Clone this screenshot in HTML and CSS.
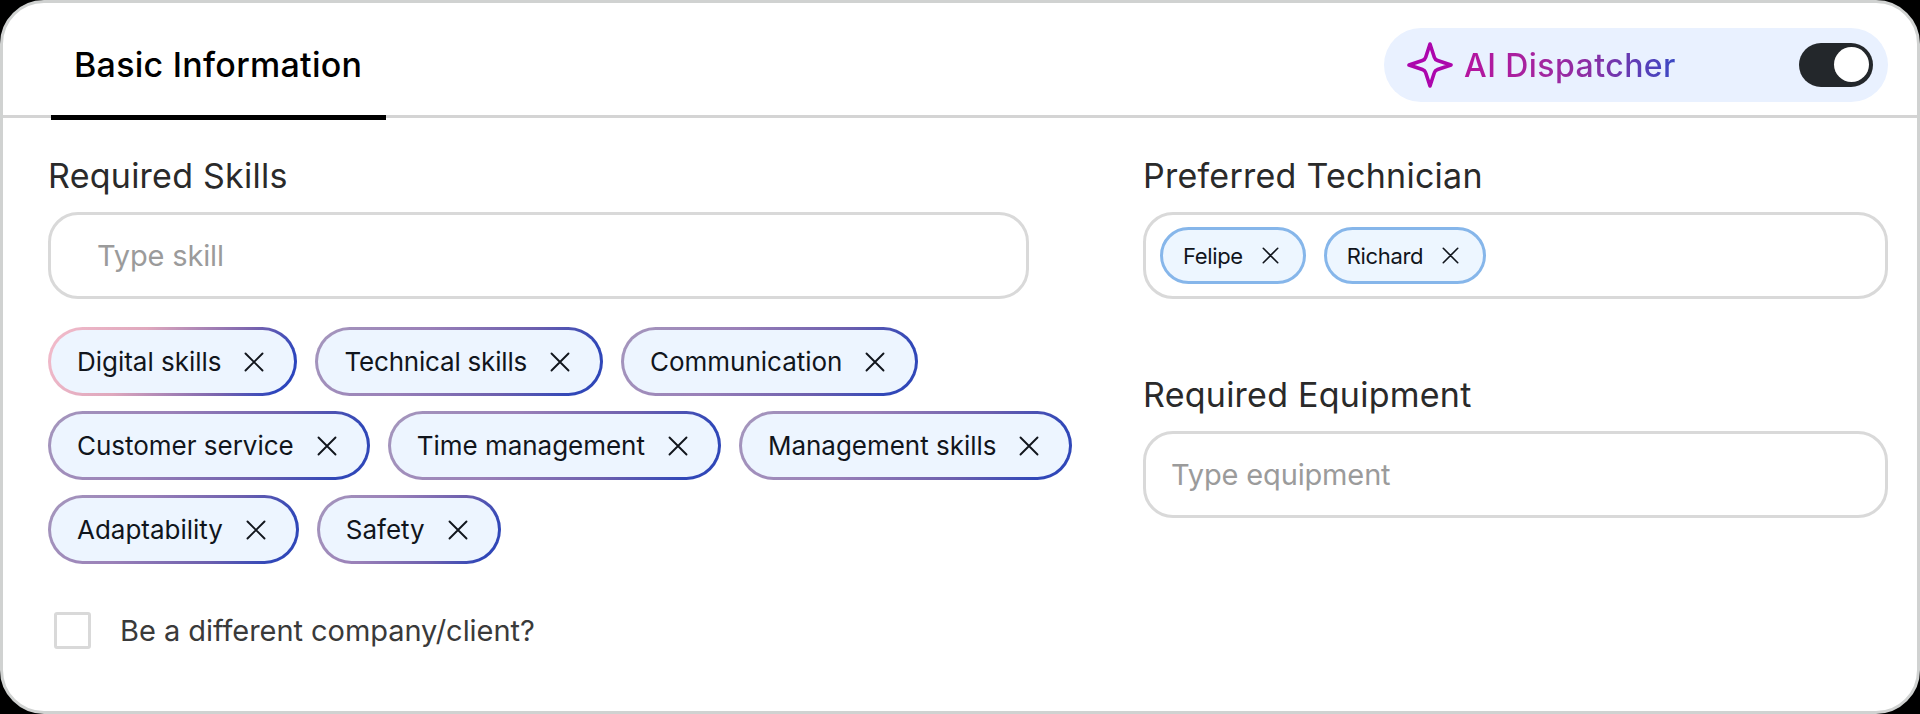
FILE: index.html
```
<!DOCTYPE html>
<html lang="en">
<head>
  <meta charset="UTF-8">
  <title>Basic Information</title>
  <meta name="viewport" content="width=device-width, initial-scale=1">
  <link rel="stylesheet" href="styles.css">
</head>
<body>
  <svg class="sprite" aria-hidden="true">
    <symbol id="close" viewBox="0 0 20 20">
      <path d="M1.5 1.5L18.5 18.5M18.5 1.5L1.5 18.5" fill="none" stroke="currentColor" stroke-width="1.9" stroke-linecap="round"/>
    </symbol>
  </svg>
  <div class="card">
    <div class="header">
      <div class="tab">Basic Information</div>
      <div class="dispatcher">
        <svg class="star" viewBox="0 0 46 46">
          <path d="M23 2L27.3 15.2Q28 17.6 30.6 18.5L44 23L30.6 27.5Q28 28.4 27.3 30.8L23 44L18.7 30.8Q18 28.4 15.4 27.5L2 23L15.4 18.5Q18 17.6 18.7 15.2Z" fill="none" stroke="#ac06ac" stroke-width="3.6" stroke-linejoin="round"/>
        </svg>
        <span class="dispatcher-label">AI Dispatcher</span>
        <span class="toggle"></span>
      </div>
    </div>
    <div class="content">
      <div class="skills">
        <label class="label" for="skill">Required Skills</label>
        <input class="field field-skill" type="text" id="skill" placeholder="Type skill">
        <div class="chips">
          <div class="row">
            <span class="chip chip-pink"><span class="chip-text">Digital skills</span><svg class="close"><use href="#close"/></svg></span>
            <span class="chip chip-tight"><span class="chip-text">Technical skills</span><svg class="close"><use href="#close"/></svg></span>
            <span class="chip"><span class="chip-text">Communication</span><svg class="close"><use href="#close"/></svg></span>
          </div>
          <div class="row">
            <span class="chip"><span class="chip-text">Customer service</span><svg class="close"><use href="#close"/></svg></span>
            <span class="chip"><span class="chip-text">Time management</span><svg class="close"><use href="#close"/></svg></span>
            <span class="chip"><span class="chip-text">Management skills</span><svg class="close"><use href="#close"/></svg></span>
          </div>
          <div class="row">
            <span class="chip"><span class="chip-text">Adaptability</span><svg class="close"><use href="#close"/></svg></span>
            <span class="chip"><span class="chip-text">Safety</span><svg class="close"><use href="#close"/></svg></span>
          </div>
        </div>
        <label class="check">
          <input class="checkbox" type="checkbox">
          <span class="check-text">Be a different company/client?</span>
        </label>
      </div>
      <div class="side">
        <div class="label">Preferred Technician</div>
        <div class="field field-tags">
          <span class="tag"><span>Felipe</span><svg class="close-small"><use href="#close"/></svg></span>
          <span class="tag"><span>Richard</span><svg class="close-small"><use href="#close"/></svg></span>
        </div>
        <label class="label label-equipment" for="equipment">Required Equipment</label>
        <input class="field" type="text" id="equipment" placeholder="Type equipment">
      </div>
    </div>
  </div>
</body>
</html>
```
FILE: styles.css
```
* {
  box-sizing: border-box;
}
body {
  margin: 0;
  background: #000;
  font-family: Inter, "Liberation Sans", sans-serif;
}
.sprite {
  display: none;
}
.card {
  height: 714px;
  background: #fff;
  border: 3px solid #d0d2d1;
  border-radius: 44px;
  overflow: hidden;
}
.header {
  display: flex;
  justify-content: space-between;
  height: 115px;
  padding: 0 29px 0 48px;
  border-bottom: 3px solid #d4d4d4;
}
.tab {
  width: 335px;
  height: 117px;
  padding-left: 23px;
  border-bottom: 5px solid #000;
  font-size: 34px;
  font-weight: 500;
  letter-spacing: 0.27px;
  line-height: 124px;
  white-space: nowrap;
  color: #000;
}
.dispatcher {
  display: flex;
  align-items: center;
  width: 504px;
  height: 74px;
  margin-top: 25px;
  padding: 0 15px 0 23px;
  border-radius: 37px;
  background: #e9f1ff;
}
.star {
  width: 46px;
  height: 46px;
}
.dispatcher-label {
  margin-left: 11px;
  padding-top: 1px;
  font-size: 32px;
  font-weight: 500;
  letter-spacing: 0.45px;
  white-space: nowrap;
  background: linear-gradient(90deg, #b5149f 0%, #a5259f 35%, #8a2fa5 60%, #3a49c4 100%);
  -webkit-background-clip: text;
  background-clip: text;
  color: transparent;
}
.toggle {
  width: 74px;
  height: 44px;
  margin-left: auto;
  padding: 4px 4px 4px 35px;
  border-radius: 22px;
  background: #23272b;
}
.toggle::after {
  content: "";
  display: block;
  width: 35px;
  height: 35px;
  border-radius: 50%;
  background: #fff;
}
.content {
  display: flex;
  justify-content: space-between;
  padding: 37px 29px 0 45px;
}
.skills {
  width: 1024px;
}
.side {
  width: 745px;
}
.label {
  display: block;
  height: 57px;
  font-size: 34px;
  letter-spacing: 0.25px;
  line-height: 42px;
  color: #2a2a2a;
}
.label-equipment {
  margin-top: 75px;
}
.field {
  display: block;
  width: 100%;
  height: 87px;
  padding: 0 25px;
  border: 3px solid #d9d9d9;
  border-radius: 30px;
  background: #fff;
  font-family: inherit;
  font-size: 29px;
  letter-spacing: -0.15px;
  color: #2a2a2a;
}
.field::placeholder {
  color: #9b9b9b;
}
.field-skill {
  width: 981px;
  padding: 0 46px;
}
.field-tags {
  display: flex;
  align-items: center;
  gap: 18px;
  padding: 0 14px;
}
.chips {
  display: flex;
  flex-direction: column;
  gap: 15px;
  margin-top: 28px;
}
.row {
  display: flex;
  gap: 18px;
}
.chip {
  display: flex;
  align-items: center;
  gap: 23px;
  height: 69px;
  padding: 0 30px 0 26px;
  border: 3px solid transparent;
  border-radius: 35px;
  background: linear-gradient(#edf5ff, #edf5ff) padding-box, linear-gradient(118deg, #a597bd 0%, #9a80b8 35%, #6c5fae 68%, #3047b8 90%) border-box;
  font-size: 26px;
  letter-spacing: -0.02px;
  white-space: nowrap;
  color: #11151c;
}
.chip-tight {
  letter-spacing: -0.2px;
}
.chip-pink {
  background: linear-gradient(#edf5ff, #edf5ff) padding-box, linear-gradient(118deg, #f3bccb 0%, #dfa8bd 35%, #7a64ae 72%, #2c45bd 92%) border-box;
}
.close {
  width: 20px;
  height: 20px;
}
.tag {
  display: flex;
  align-items: center;
  gap: 19px;
  height: 57px;
  padding: 0 24px 0 20px;
  border: 3px solid #86b6ea;
  border-radius: 29px;
  background: #edf6ff;
  font-size: 22px;
  letter-spacing: -0.35px;
  color: #11151c;
}
.close-small {
  width: 17px;
  height: 17px;
}
.check {
  display: flex;
  align-items: center;
  gap: 29px;
  margin: 48px 0 0 6px;
}
.checkbox {
  appearance: none;
  width: 37px;
  height: 37px;
  margin: 0;
  border: 3px solid #d9d9d9;
  border-radius: 3px;
}
.check-text {
  font-size: 29px;
  letter-spacing: -0.05px;
  color: #3a3a3a;
}
```
